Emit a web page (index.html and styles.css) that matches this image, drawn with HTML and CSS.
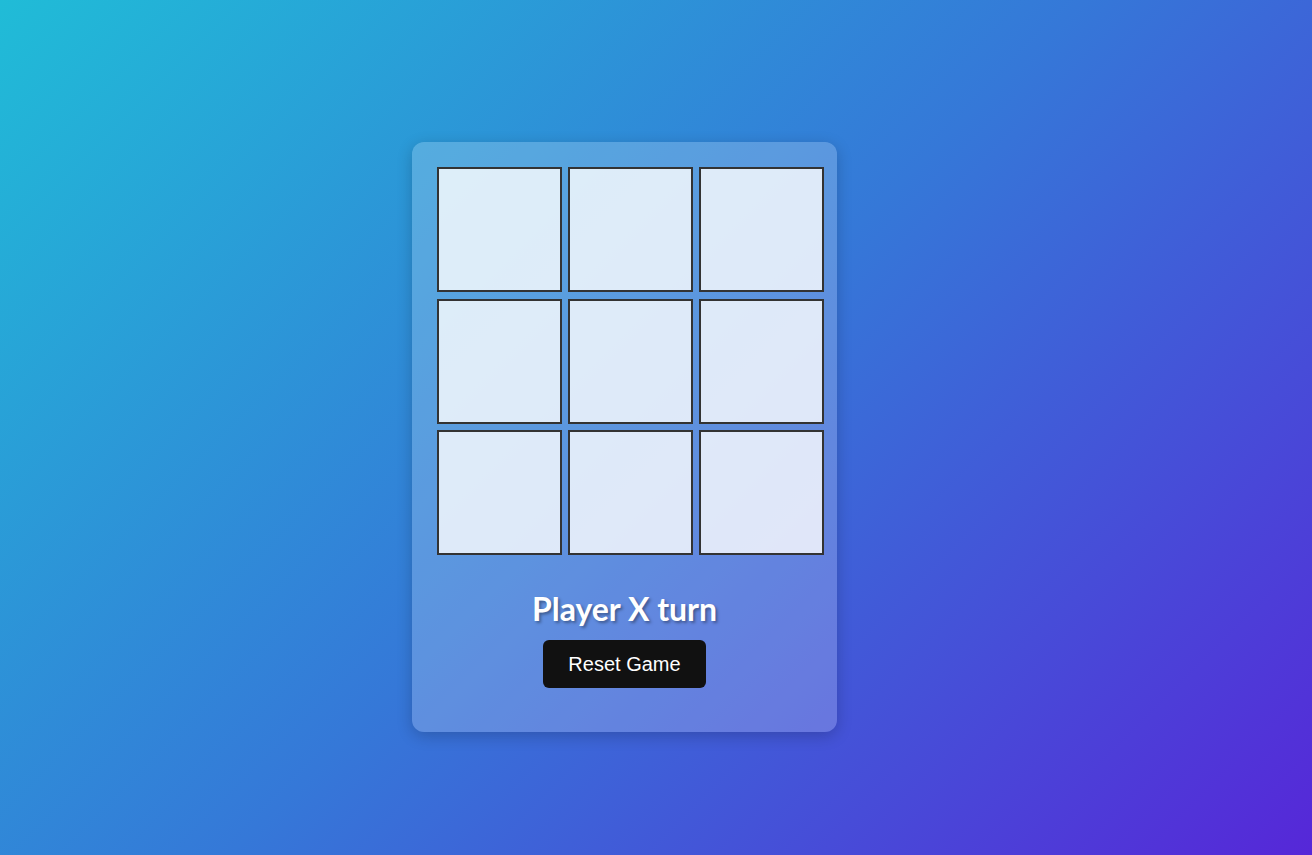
FILE: index.html
```html
<!DOCTYPE html>
<html lang="en">
<head>
<meta charset="utf-8">
<title>Tic Tac Toe</title>
<link rel="stylesheet" href="styles.css">
</head>
<body>
<main class="page">
  <section class="card">
    <div class="board">
      <button class="cell"></button>
      <button class="cell"></button>
      <button class="cell"></button>
      <button class="cell"></button>
      <button class="cell"></button>
      <button class="cell"></button>
      <button class="cell"></button>
      <button class="cell"></button>
      <button class="cell"></button>
    </div>
    <h2 class="status">Player X turn</h2>
    <button class="reset">Reset Game</button>
  </section>
</main>
</body>
</html>
```
FILE: styles.css
```css
html, body {
  margin: 0;
  padding: 0;
  height: 100%;
}
body {
  background: linear-gradient(135deg, #20bcd7 0%, #3578d8 50%, #5627d8 100%);
  font-family: "Liberation Sans", Arial, sans-serif;
}
.page {
  height: 100%;
  display: flex;
  justify-content: flex-start;
  align-items: flex-start;
}
.card {
  margin-top: 142px;
  margin-left: 412px;
  width: 425px;
  height: 590px;
  box-sizing: border-box;
  padding: 25px 13px 0 25px;
  background: rgba(255, 255, 255, 0.2);
  border-radius: 12px;
  box-shadow: 0 4px 16px rgba(0, 0, 0, 0.2);
  display: flex;
  flex-direction: column;
  align-items: center;
}
.board {
  display: grid;
  grid-template-columns: repeat(3, 125px);
  grid-template-rows: repeat(3, 125px);
  column-gap: 6px;
  row-gap: 6.5px;
  align-self: flex-start;
}
.cell {
  width: 125px;
  height: 125px;
  box-sizing: border-box;
  border: 2px solid #333;
  background: rgba(255, 255, 255, 0.8);
  padding: 0;
  margin: 0;
}
.status {
  margin: 34px 0 0 -12px;
  font-family: "Gill Sans", "Lato", sans-serif;
  font-weight: 700;
  font-size: 32px;
  line-height: 40px;
  color: #fff;
  text-shadow: 2px 2px 3px rgba(0, 0, 0, 0.35);
}
.reset {
  margin: 11px 0 0 -12px;
  padding: 12px 25px;
  font-family: "Liberation Sans", Arial, sans-serif;
  font-size: 20px;
  line-height: 24px;
  color: #fff;
  background: #111;
  border: none;
  border-radius: 6px;
}
```
